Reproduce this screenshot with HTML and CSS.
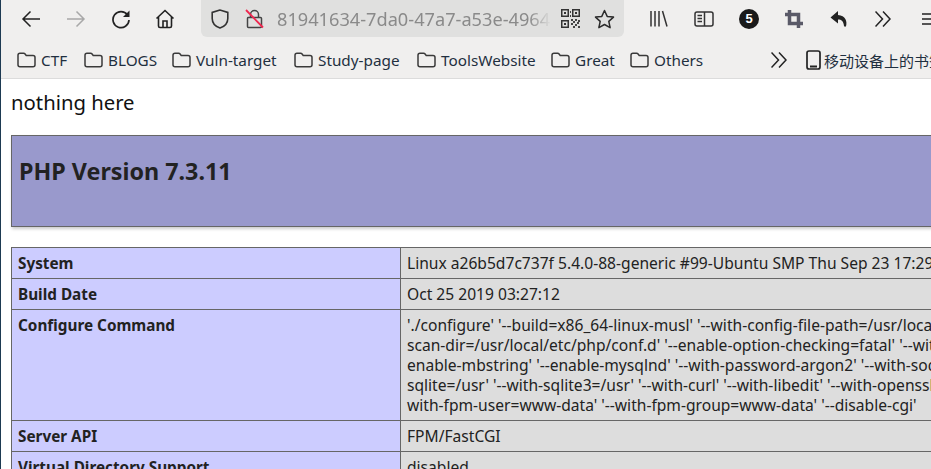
FILE: index.html
```html
<!DOCTYPE html>
<html lang="en">
<head>
<meta charset="utf-8">
<title>phpinfo</title>
<link rel="stylesheet" href="styles.css">
</head>
<body>
<svg class="defs" width="0" height="0"><defs>
<symbol id="folder" viewBox="0 0 19 16"><path d="M1 3.200C1 2 1.900 1.200 3 1.200h3.600c.7 0 1.100.3 1.500.8L9.200 3.400h6.800c1.200 0 2 .9 2 2v7.400c0 1.200-.9 2-2 2H3c-1.100 0-2-.8-2-2z" fill="none" stroke="#3a3a3a" stroke-width="1.500"/></symbol>
</defs></svg>
<header class="chrome">
  <div class="toolbar">
    <svg class="ic back" width="20" height="20" viewBox="0 0 20 20"><path d="M19 10H2M9.500 2.500 2 10l7.500 7.500" fill="none" stroke="#222" stroke-width="1.500"/></svg>
    <svg class="ic fwd" width="20" height="20" viewBox="0 0 20 20"><path d="M1 10h17M10.500 2.500 18 10l-7.500 7.500" fill="none" stroke="#a8a8a8" stroke-width="1.500"/></svg>
    <svg class="ic reload" width="20" height="20" viewBox="0 0 20 20"><path d="M16.500 6A8 8 0 1 0 18 11" fill="none" stroke="#222" stroke-width="1.700"/><path d="M18.500 1.500v6.500H12z" fill="#222"/></svg>
    <svg class="ic home" width="20" height="20" viewBox="0 0 20 20"><path d="M1.500 9.500 10 1.500l8.500 8M3.500 8v9c0 1 .5 1.500 1.500 1.500h10c1 0 1.500-.5 1.500-1.500V8M8 18.500V12h4v6.500" fill="none" stroke="#222" stroke-width="1.600"/></svg>
    <div class="urlbar">
      <svg class="shield" width="18" height="20" viewBox="0 0 18 20"><path d="M9 1 1.200 3.400v6c0 5 3.800 8.200 7.800 9.600 4-1.400 7.800-4.600 7.800-9.600v-6z" fill="none" stroke="#333" stroke-width="1.600"/></svg>
      <svg class="lock" width="19" height="20" viewBox="0 0 19 20"><path d="M3 8.500h12.500c.8 0 1 .4 1 1V17.500c0 .7-.4 1-1 1H3.500c-.7 0-1-.3-1-1V9.500c0-.6.100-1 .5-1zM5.500 8.500V5.500a4 4 0 0 1 8 0v3" fill="none" stroke="#444" stroke-width="1.500"/><path d="M1 1 18 18.500" stroke="#f0264f" stroke-width="1.800"/></svg>
      <span class="url">81941634-7da0-47a7-a53e-4964-b1f5</span>
      <svg class="qr" width="19" height="19" viewBox="0 0 19 19"><path d="M0 0h8v8H0zM1.500 1.500v5h5v-5zM3 3h2v2H3zM11 0h8v8h-8zM12.500 1.500v5h5v-5zM14 3h2v2h-2zM0 11h8v8H0zM1.500 12.500v5h5v-5zM3 14h2v2H3z" fill="#333" fill-rule="evenodd"/><path d="M10 10h2v2h-2zM14 10h2v2h-2zM17 11h2v2h-2zM12 12h2v2h-2zM16 13h2v2h-2zM10 14h2v2h-2zM14 15h2v2h-2zM12 17h2v2h-2zM17 17h2v2h-2zM9 2h1v2H9zM9 6h1v2H9z" fill="#444"/></svg>
      <svg class="star" width="21" height="20" viewBox="0 0 21 20"><path d="M10.500 1.500 13.200 7.400l6.300.7-4.700 4.300 1.300 6.300-5.600-3.200-5.600 3.200 1.300-6.300L1.500 8.100l6.300-.7z" fill="none" stroke="#2b2b2b" stroke-width="1.500" stroke-linejoin="round"/></svg>
    </div>
    <div class="tools">
      <svg class="t-lib" width="18" height="18" viewBox="0 0 18 18"><path d="M1 1v15.500M5 1v15.500M9 1v15.500M12.500 1l4.500 15.500" fill="none" stroke="#333" stroke-width="1.500"/></svg>
      <svg class="t-side" width="20" height="16" viewBox="0 0 20 16"><rect x="1" y="1" width="18" height="14" rx="2" fill="none" stroke="#333" stroke-width="1.500"/><path d="M10.500 1v14M3.500 4.500h4.500M3.500 7.500h4.500M3.500 10.500h4.500" stroke="#333" stroke-width="1.500"/></svg>
      <span class="badge">5</span>
      <svg class="t-crop" width="18" height="18" viewBox="0 0 18 18"><path d="M4.500 0v13.500H18M0 4.500h13.500V18" fill="none" stroke="#5a5a68" stroke-width="3.500"/></svg>
      <svg class="t-undo" width="18" height="18" viewBox="0 0 18 18"><path d="M8 1 .5 7.500 8 13.500V9.500c3.500 0 5.500 1.500 6 6.500.3.800 1.500 1 2 .3 1.500-5-.5-10.800-8-11.300z" fill="#222"/></svg>
      <svg class="t-more" width="16" height="16" viewBox="0 0 16 16"><path d="M.5 .5 7.500 8l-7 7.500M8 .5 15 8l-7 7.500" fill="none" stroke="#222" stroke-width="1.500"/></svg>
      <svg class="burger" width="18" height="12" viewBox="0 0 18 12"><path d="M0 1h18M0 6h18M0 11h18" stroke="#222" stroke-width="1.500"/></svg>
    </div>
  </div>
  <nav class="bookmarks">
    <a class="bm"><svg width="19" height="16"><use href="#folder"/></svg>CTF</a>
    <a class="bm"><svg width="19" height="16"><use href="#folder"/></svg>BLOGS</a>
    <a class="bm"><svg width="19" height="16"><use href="#folder"/></svg>Vuln-target</a>
    <a class="bm"><svg width="19" height="16"><use href="#folder"/></svg>Study-page</a>
    <a class="bm"><svg width="19" height="16"><use href="#folder"/></svg>ToolsWebsite</a>
    <a class="bm"><svg width="19" height="16"><use href="#folder"/></svg>Great</a>
    <a class="bm"><svg width="19" height="16"><use href="#folder"/></svg>Others</a>
    <svg class="more" width="16" height="16" viewBox="0 0 16 16"><path d="M.5 .5 7.500 8l-7 7.500M8 .5 15 8l-7 7.500" fill="none" stroke="#222" stroke-width="1.500"/></svg>
    <a class="mobile"><svg width="15" height="20" viewBox="0 0 15 20"><rect x="1" y="1" width="13" height="18" rx="2" fill="none" stroke="#222" stroke-width="1.700"/><path d="M4 16.500h7" stroke="#222" stroke-width="2"/></svg>移动设备上的书签</a>
  </nav>
</header>
<main class="page">
  <p class="note">nothing here</p>
  <div class="center">
    <table class="head"><tr><td><h1>PHP Version 7.3.11</h1></td></tr></table>
    <table class="info">
      <colgroup><col class="col-e"><col></colgroup>
      <tr><td class="e">System</td><td class="v">Linux a26b5d7c737f 5.4.0-88-generic #99-Ubuntu SMP Thu Sep 23 17:29:00 UTC 2021 x86_64</td></tr>
      <tr><td class="e">Build Date</td><td class="v">Oct 25 2019 03:27:12</td></tr>
      <tr><td class="e">Configure Command</td><td class="v">'./configure' '--build=x86_64-linux-musl' '--with-config-file-path=/usr/local/etc/php' '--with-config-file-<br>scan-dir=/usr/local/etc/php/conf.d' '--enable-option-checking=fatal' '--with-mhash' '--enable-ftp' '--<br>enable-mbstring' '--enable-mysqlnd' '--with-password-argon2' '--with-sodium=shared' '--with-pdo-<br>sqlite=/usr' '--with-sqlite3=/usr' '--with-curl' '--with-libedit' '--with-openssl' '--with-zlib' '--enable-fpm' '--<br>with-fpm-user=www-data' '--with-fpm-group=www-data' '--disable-cgi'</td></tr>
      <tr><td class="e">Server API</td><td class="v">FPM/FastCGI</td></tr>
      <tr><td class="e">Virtual Directory Support</td><td class="v">disabled</td></tr>
    </table>
  </div>
</main>
</body>
</html>
```
FILE: styles.css
```css
html, body { margin: 0; padding: 0; }
body {
  width: 931px;
  height: 469px;
  overflow: hidden;
  box-sizing: border-box;
  border-left: 1px solid #1d3a52;
  background: #fff;
  font-family: "Noto Sans", "Open Sans", "Noto Sans CJK SC", sans-serif;
  color: #222;
}
.defs { position: absolute; }
.chrome { background: #f0efee; border-bottom: 1px solid #dcdcdc; height: 78px; }
.toolbar { display: flex; align-items: center; height: 37px; padding-left: 20px; }
.ic { flex: none; }
.fwd { margin-left: 25px; }
.reload { margin-left: 25px; }
.home { margin-left: 24px; }
.urlbar {
  flex: none;
  width: 423px;
  height: 37px;
  margin-left: 26px;
  display: flex;
  align-items: center;
  background: #e0e0df;
  border-radius: 0 0 6px 6px;
  box-sizing: border-box;
  padding-left: 10px;
}
.lock { margin-left: 16px; }
.url {
  width: 274px;
  margin-left: 13px;
  overflow: hidden;
  white-space: nowrap;
  font-size: 18.200px;
  color: #8a8a8a;
  -webkit-mask-image: linear-gradient(to right, #000 92%, transparent 100%);
  mask-image: linear-gradient(to right, #000 92%, transparent 100%);
}
.qr { margin-left: 10px; }
.star { margin-left: 14px; }
.tools { display: flex; align-items: center; margin-left: 26px; flex: none; }
.tools > * { flex: none; }
.t-lib { margin-right: 26px; }
.t-side { margin-right: 25px; }
.badge {
  width: 20px;
  height: 20px;
  margin-right: 26px;
  border-radius: 50%;
  background: #1a1a1a;
  color: #fff;
  font: bold 13px/20px "Liberation Sans", sans-serif;
  text-align: center;
}
.t-crop { margin-right: 27px; }
.t-undo { margin-right: 27px; }
.t-more { margin-right: 31px; }
.bookmarks {
  display: grid;
  grid-template-columns: 67px 88px 122px 123px 134px 79px 141px 35px auto;
  align-items: center;
  box-sizing: border-box;
  height: 41px;
  padding: 5px 0 0 16px;
  white-space: nowrap;
  overflow: hidden;
  font-size: 15.300px;
  color: #1f2f3f;
}
.bm { display: flex; align-items: center; gap: 5px; }
.mobile { display: flex; align-items: center; gap: 3px; font-size: 15px; }
.page { padding: 0 0 0 10px; overflow: hidden; }
.note { margin: 10px 0 0; font-size: 20.300px; line-height: 26px; color: #111; }
.center { width: 934px; margin-top: 20px; }
table { border-collapse: collapse; width: 934px; table-layout: fixed; }
.head { height: 92px; box-shadow: 1px 2px 3px #ccc; background: #9999cc; margin-bottom: 20px; }
.head td { border: 1px solid #666; padding: 0 7px; vertical-align: top; }
h1 { margin: 18px 0 0; font-size: 23.300px; line-height: 34px; font-weight: 700; color: #222; }
.info { font-size: 15.600px; line-height: 20px; color: #222; }
.info td { border: 1px solid #666; padding: 5px 6px; vertical-align: top; }
.col-e { width: 389px; }
.e { background: #ccccff; font-weight: 700; font-size: 15.300px; color: #222; }
.v { background: #ddd; white-space: nowrap; overflow: hidden; }
```
